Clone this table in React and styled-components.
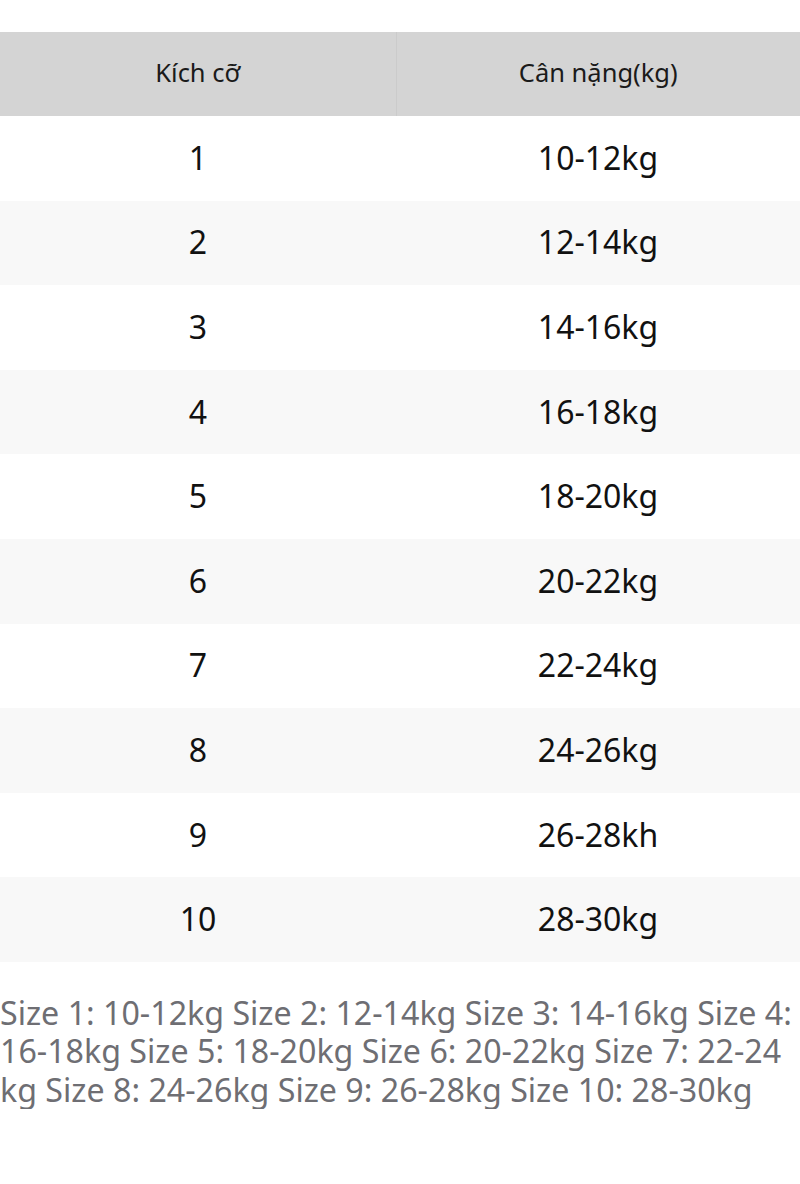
import styled, { createGlobalStyle } from "styled-components";

const GlobalStyle = createGlobalStyle`
  body {
    margin: 0;
    background: #ffffff;
    font-family: "Noto Sans", "Open Sans", sans-serif;
  }
`;

const sizes = [
  ["1", "10-12kg"],
  ["2", "12-14kg"],
  ["3", "14-16kg"],
  ["4", "16-18kg"],
  ["5", "18-20kg"],
  ["6", "20-22kg"],
  ["7", "22-24kg"],
  ["8", "24-26kg"],
  ["9", "26-28kh"],
  ["10", "28-30kg"],
];

function App() {
  return (
    <>
      <GlobalStyle />
      <Wrapper>
        <SizeTable>
          <colgroup>
            <col style={{ width: "396px" }} />
            <col />
          </colgroup>
          <thead>
            <tr>
              <HeadCell $divider>Kích cỡ</HeadCell>
              <HeadCell>Cân nặng(kg)</HeadCell>
            </tr>
          </thead>
          <tbody>
            {sizes.map(([size, weight], i) => (
              <Row key={size} $striped={i % 2 === 1}>
                <Cell>{size}</Cell>
                <Cell>{weight}</Cell>
              </Row>
            ))}
          </tbody>
        </SizeTable>
        <Note>
          Size 1: 10-12kg Size 2: 12-14kg Size 3: 14-16kg Size 4: 16-18kg Size
          5: 18-20kg Size 6: 20-22kg Size 7: 22-24 kg Size 8: 24-26kg Size 9:
          26-28kg Size 10: 28-30kg
        </Note>
      </Wrapper>
    </>
  );
}

export default App;

const Wrapper = styled.div`
  padding-top: 32px;
  width: 800px;
`;

const SizeTable = styled.table`
  width: 100%;
  border-collapse: collapse;
  table-layout: fixed;
`;

const HeadCell = styled.th`
  height: 80px;
  padding: 0 0 4px;
  background: #d4d4d4;
  color: #1a1a1a;
  font-size: 25.5px;
  font-weight: 400;
  text-align: center;
  border-right: ${({ $divider }) => ($divider ? "1px solid #cbcbcb" : "none")};
`;

const Row = styled.tr`
  background: ${({ $striped }) => ($striped ? "#f8f8f8" : "#ffffff")};
`;

const Cell = styled.td`
  height: 82.6px;
  padding: 0 0 2px;
  text-align: center;
  font-size: 32px;
  color: #111111;
`;

const Note = styled.p`
  margin: 32px 0 0;
  font-size: 32.2px;
  line-height: 38.5px;
  color: #6e6e73;
`;
